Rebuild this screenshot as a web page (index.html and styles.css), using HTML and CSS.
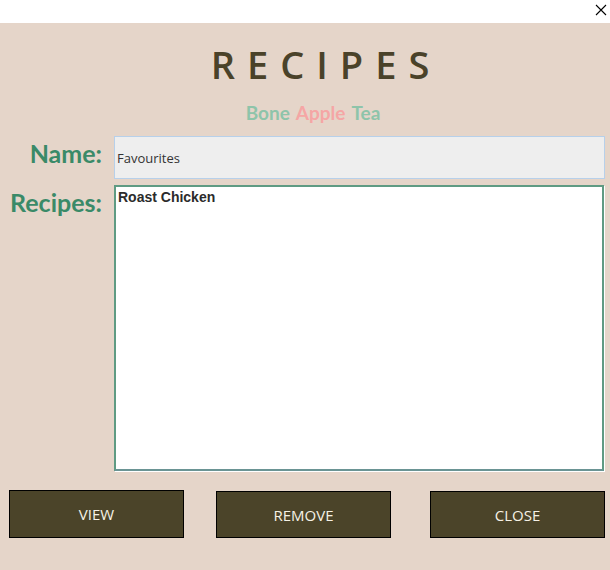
FILE: index.html
```html
<!DOCTYPE html>
<html>
<head>
<meta charset="utf-8">
<link rel="stylesheet" href="styles.css">
</head>
<body>
<div class="titlebar">
  <svg class="close-x" width="12" height="12" viewBox="0 0 12 12"><path d="M1 1 L11 11 M11 1 L1 11" stroke="#000" stroke-width="1.1" fill="none"/></svg>
</div>
<main class="app">
  <h1 class="title">RECIPES</h1>
  <div class="subtitle"><span class="green">Bone</span> <span class="pink">Apple</span> <span class="green">Tea</span></div>
  <div class="form">
    <div class="row">
      <div class="label">Name:</div>
      <div class="name-field">Favourites</div>
    </div>
    <div class="row">
      <div class="label">Recipes:</div>
      <div class="list-box"><div class="item">Roast Chicken</div></div>
    </div>
  </div>
  <div class="buttons">
    <button class="btn btn-view">VIEW</button>
    <button class="btn btn-remove">REMOVE</button>
    <button class="btn btn-close">CLOSE</button>
  </div>
</main>
</body>
</html>
```

FILE: styles.css
```css
html, body {
  margin: 0;
  padding: 0;
  height: 100%;
  overflow: hidden;
}
body {
  background: #e5d5c9;
  font-family: "Open Sans", "Liberation Sans", sans-serif;
}
.titlebar {
  height: 23px;
  background: #ffffff;
  display: flex;
  justify-content: flex-end;
  align-items: flex-start;
}
.close-x {
  margin-top: 4px;
  margin-right: 3px;
}
.app {
  display: flex;
  flex-direction: column;
}
.title {
  margin: 0;
  padding: 15px 0 0 42px;
  text-align: center;
  font-family: "Open Sans", sans-serif;
  font-weight: 600;
  font-size: 38px;
  line-height: 52px;
  letter-spacing: 12px;
  color: #4a4229;
}
.subtitle {
  margin-top: 11px;
  padding-left: 16px;
  text-align: center;
  font-family: Lato, sans-serif;
  font-weight: 700;
  font-size: 19px;
  line-height: 23px;
  word-spacing: 2px;
}
.green { color: #8ec4aa; }
.pink { color: #f5a6a5; }
.form {
  margin-top: 12px;
  display: flex;
  flex-direction: column;
  gap: 6px;
  padding-right: 5px;
}
.row {
  display: flex;
  align-items: flex-start;
  gap: 12px;
}
.label {
  width: 102px;
  flex: none;
  text-align: right;
  margin-top: 2px;
  font-family: Lato, sans-serif;
  font-weight: 700;
  font-size: 25px;
  line-height: 30px;
  color: #3a8a68;
}
.name-field {
  flex: 1;
  height: 41px;
  box-sizing: content-box;
  border: 1px solid #b7d0ea;
  background: #eeeeee;
  display: flex;
  align-items: center;
  padding-left: 2px;
  font-family: "Open Sans", sans-serif;
  font-size: 13px;
  color: #333333;
}
.list-box {
  flex: 1;
  height: 278px;
  margin-right: 1px;
  border: 2px solid #5f9b83;
  border-bottom-color: #6a9494;
  background: #ffffff;
  box-shadow: 1px 1px 0 #ffffff;
  padding: 2px 2px;
}
.item {
  font-family: "Liberation Sans", Arial, sans-serif;
  font-weight: 700;
  font-size: 14px;
  color: #2b2b2b;
}
.buttons {
  margin-top: 19px;
  display: flex;
  padding-left: 9px;
}
.btn {
  width: 175px;
  height: 48px;
  margin: 0;
  border: 1px solid #000000;
  background: #4b4429;
  color: #f6f2e6;
  font-family: "Open Sans", sans-serif;
  font-size: 15px;
  padding: 0;
}
.btn-remove {
  margin-left: 32px;
  height: 47px;
  margin-top: 1px;
}
.btn-close {
  margin-left: 39px;
  height: 47px;
  margin-top: 1px;
}
```
